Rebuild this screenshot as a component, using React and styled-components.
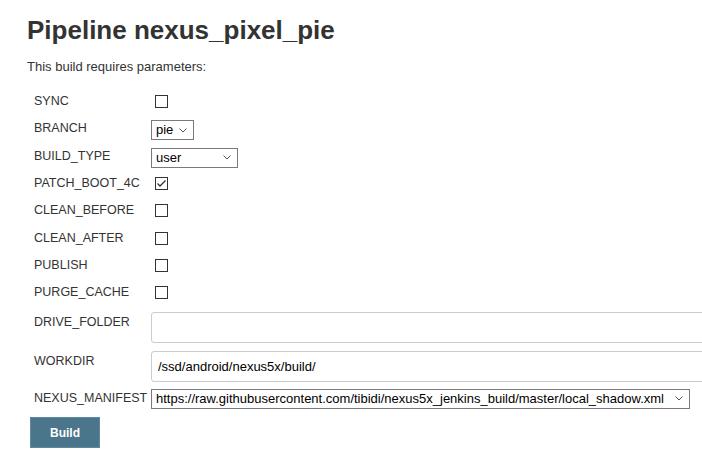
import React from 'react';
import styled, { createGlobalStyle } from 'styled-components';

const GlobalStyle = createGlobalStyle`
  html, body {
    margin: 0;
    padding: 0;
    overflow: hidden;
    background: #fff;
  }

  body {
    font-family: "Liberation Sans", Arial, Helvetica, sans-serif;
    font-size: 13px;
    color: #333;
  }
`;

const params = [
  { name: 'SYNC', type: 'bool', value: false },
  { name: 'BRANCH', type: 'choice', value: 'pie', width: 43 },
  { name: 'BUILD_TYPE', type: 'choice', value: 'user', width: 87 },
  { name: 'PATCH_BOOT_4C', type: 'bool', value: true },
  { name: 'CLEAN_BEFORE', type: 'bool', value: false },
  { name: 'CLEAN_AFTER', type: 'bool', value: false },
  { name: 'PUBLISH', type: 'bool', value: false },
  { name: 'PURGE_CACHE', type: 'bool', value: false },
  { name: 'DRIVE_FOLDER', type: 'string', value: '' },
  { name: 'WORKDIR', type: 'string', value: '/ssd/android/nexus5x/build/' },
  {
    name: 'NEXUS_MANIFEST',
    type: 'choice',
    value: 'https://raw.githubusercontent.com/tibidi/nexus5x_jenkins_build/master/local_shadow.xml',
    width: 539,
    tall: true,
  },
];

function Chevron() {
  return (
    <svg width="8" height="5" viewBox="0 0 8 5">
      <path d="M0.5 0.5 L4 4 L7.5 0.5" fill="none" stroke="#555" strokeWidth="1" />
    </svg>
  );
}

function CheckBox({ checked }) {
  return (
    <Box>
      {checked && (
        <svg width="11" height="11" viewBox="0 0 11 11">
          <path d="M1.5 5.5 L4 8 L9.5 2.5" fill="none" stroke="#333" strokeWidth="1.3" />
        </svg>
      )}
    </Box>
  );
}

function Param({ p }) {
  if (p.type === 'bool') {
    return (
      <Row>
        <Label>{p.name}</Label>
        <CheckBox checked={p.value} />
      </Row>
    );
  }
  if (p.type === 'choice') {
    return (
      <Row $h={p.tall ? 29 : 27.3}>
        <Label>{p.name}</Label>
        <Select $w={p.width} $lower={!p.tall}>
          <span>{p.value}</span>
          <Chevron />
        </Select>
      </Row>
    );
  }
  return (
    <TextRow>
      <TopLabel>{p.name}</TopLabel>
      <TextInput defaultValue={p.value} />
    </TextRow>
  );
}

export default function App() {
  return (
    <>
      <GlobalStyle />
      <Main>
        <Title>Pipeline nexus_pixel_pie</Title>
        <Intro>This build requires parameters:</Intro>
        <Form>
          {params.map((p) => (
            <Param key={p.name} p={p} />
          ))}
        </Form>
        <BuildButton>Build</BuildButton>
      </Main>
    </>
  );
}

const Main = styled.div`
  padding: 15px 0 0 27px;
  overflow: hidden;
`;

const Title = styled.h1`
  margin: 0;
  font-size: 26px;
  line-height: 30px;
  font-weight: bold;
  color: #333;
`;

const Intro = styled.p`
  margin: 14px 0 0;
  line-height: 15px;
`;

const Form = styled.div`
  margin: 14px 0 0 7px;
  display: flex;
  flex-direction: column;
`;

const Row = styled.div`
  display: flex;
  align-items: center;
  height: ${(p) => p.$h || 27.3}px;
`;

const TextRow = styled.div`
  display: flex;
  align-items: flex-start;
  padding: 6px 0 2px;
`;

const Label = styled.div`
  width: 117px;
  flex: none;
  white-space: nowrap;
  font-size: 12.5px;
  line-height: 15px;
  color: #333;
`;

const TopLabel = styled(Label)`
  padding-top: 3px;
`;

const Box = styled.span`
  box-sizing: border-box;
  width: 13px;
  height: 13px;
  margin-left: 4px;
  border: 1px solid #333;
  background: #fff;
  display: flex;
  align-items: center;
  justify-content: center;
`;

const Select = styled.div`
  box-sizing: border-box;
  width: ${(p) => p.$w}px;
  height: 20px;
  margin-top: ${(p) => (p.$lower ? 3 : 0)}px;
  border: 1px solid #7a7a7a;
  background: #fff;
  display: flex;
  align-items: center;
  justify-content: space-between;
  padding: 0 6px 0 4px;
  white-space: nowrap;
  color: #000;
  line-height: 16px;
`;

const TextInput = styled.input`
  box-sizing: border-box;
  flex: 1;
  min-width: 0;
  margin-right: -8px;
  height: 31px;
  border: 1px solid #ccc;
  border-radius: 3px;
  padding: 0 6px;
  font-family: inherit;
  font-size: 13px;
  color: #000;
  background: #fff;
  outline: none;
`;

const BuildButton = styled.button`
  margin: 4px 0 0 3px;
  width: 70px;
  height: 31px;
  border: 1px solid #5d8aa1;
  background: #4b758b;
  color: #fff;
  font-family: inherit;
  font-size: 12px;
  font-weight: bold;
  cursor: pointer;
`;
